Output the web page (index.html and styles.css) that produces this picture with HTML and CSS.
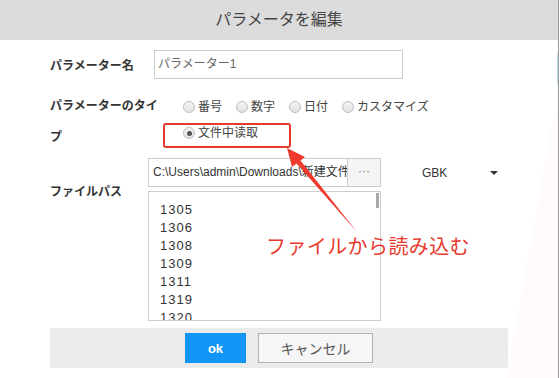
FILE: index.html
```html
<!DOCTYPE html>
<html lang="ja">
  <head>
    <meta charset="UTF-8" />
    <title>パラメータを編集</title>
    <link rel="stylesheet" href="styles.css">
  </head>
  <body>
    <div class="dialog">
      <!-- Title bar -->
      <div class="dialog-header">パラメータを編集</div>

      <div class="form">
        <!-- Name -->
        <div class="row row-name">
          <div class="label label-name">パラメーター名</div>
          <div class="text-input">パラメーター1</div>
        </div>

        <!-- Type -->
        <div class="row row-type">
          <div class="label label-type">パラメーターのタイプ</div>
          <div class="options">
            <div class="option-line">
              <span class="radio-item"><span class="radio"></span>番号</span>
              <span class="radio-item"><span class="radio"></span>数字</span>
              <span class="radio-item"><span class="radio"></span>日付</span>
              <span class="radio-item"><span class="radio"></span>カスタマイズ</span>
            </div>
            <div class="option-line second">
              <span class="radio-item marked"><span class="radio checked"></span>文件中读取</span>
            </div>
          </div>
        </div>

        <!-- File path -->
        <div class="row row-file">
          <div class="label label-file">ファイルパス</div>
          <div class="file-col">
            <div class="path-group">
              <div class="path-input">C:\Users\admin\Downloads\新建文件</div>
              <div class="browse-btn">···</div>
            </div>
            <div class="preview">
              <div class="preview-line">1305</div>
              <div class="preview-line">1306</div>
              <div class="preview-line">1308</div>
              <div class="preview-line">1309</div>
              <div class="preview-line">1311</div>
              <div class="preview-line">1319</div>
              <div class="preview-line">1320</div>
              <div class="scroll-thumb"></div>
            </div>
          </div>
          <div class="encoding">
            <span>GBK</span>
            <span class="caret"></span>
          </div>
        </div>

        <!-- Buttons -->
        <div class="dialog-footer">
          <button class="btn btn-ok">ok</button>
          <button class="btn btn-cancel">キャンセル</button>
        </div>
      </div>

      <!-- Annotation -->
      <svg class="arrow" width="560" height="378" viewBox="0 0 560 378">
        <polygon points="287,148 305,157 300.5,160.5 357,232 296.5,163.5 292,167" fill="#ef3a2d" />
      </svg>
      <div class="note">ファイルから読み込む</div>

      <div class="edge-tint"></div>
      <div class="edge-blue"></div>
    </div>
  </body>
</html>
```

FILE: styles.css
```css
/* Basic Reset */
* {
  margin: 0;
  padding: 0;
  box-sizing: border-box;
}

body {
  font-family: "Liberation Sans", "Noto Sans CJK JP", sans-serif;
  background-color: #ffffff;
  color: #333;
  width: 560px;
  height: 378px;
  overflow: hidden;
}

/* Dialog */
.dialog {
  position: relative;
  width: 559px;
  height: 378px;
  border-right: 1px solid #9c9c9c;
  overflow: hidden;
}

.dialog-header {
  height: 40px;
  line-height: 40px;
  background-color: #dcdcdc;
  text-align: center;
  font-size: 16px;
  color: #444;
}

.form {
  padding-left: 50px;
}

.row {
  display: flex;
}

.label {
  font-size: 12px;
  font-weight: bold;
  color: #333;
}

/* Name row */
.row-name {
  margin-top: 10px;
  height: 29px;
  align-items: center;
}

.label-name {
  width: 104px;
}

.text-input {
  width: 249px;
  height: 29px;
  border: 1px solid #cccccc;
  font-size: 12px;
  line-height: 27px;
  padding-left: 3px;
  color: #666;
}

/* Type row */
.row-type {
  margin-top: 12px;
}

.label-type {
  width: 115px;
  margin-right: 18px;
  line-height: 31px;
}

.option-line {
  display: flex;
  align-items: center;
  height: 31px;
}

.option-line.second {
  height: 22px;
}

.radio-item {
  display: inline-flex;
  align-items: center;
  font-size: 12px;
  line-height: 16px;
  color: #444;
  margin-right: 14px;
}

.radio {
  width: 12px;
  height: 12px;
  border-radius: 50%;
  border: 1px solid #bdbdbd;
  background: linear-gradient(#f4f4f4, #e2e2e2);
  margin-right: 3px;
  position: relative;
}

.radio.checked::after {
  content: "";
  position: absolute;
  left: 2.5px;
  top: 2.5px;
  width: 5px;
  height: 5px;
  border-radius: 50%;
  background-color: #555;
}

/* red highlight round the chosen option */
.marked {
  position: relative;
}

.marked::before {
  content: "";
  position: absolute;
  left: -20px;
  top: -2px;
  width: 124px;
  height: 21px;
  border: 2px solid #e53a2c;
  border-radius: 3px;
}

/* File row */
.row-file {
  margin-top: 5px;
}

.label-file {
  width: 98px;
  padding-top: 24px;
}

.file-col {
  width: 233px;
}

.path-group {
  display: flex;
  height: 29px;
}

.path-input {
  flex: 1;
  border: 1px solid #cccccc;
  border-right: none;
  font-size: 12px;
  line-height: 27px;
  padding-left: 4px;
  white-space: nowrap;
  overflow: hidden;
  color: #333;
}

.browse-btn {
  width: 34px;
  border: 1px solid #cccccc;
  background-color: #f5f5f5;
  text-align: center;
  line-height: 25px;
  font-size: 12px;
  color: #777;
}

.preview {
  position: relative;
  margin-top: 4px;
  height: 130px;
  border: 1px solid #cccccc;
  padding: 9px 0 0 11px;
  overflow: hidden;
}

.preview-line {
  font-size: 13px;
  line-height: 18px;
  letter-spacing: 1px;
  color: #333;
}

.scroll-thumb {
  position: absolute;
  right: 1px;
  top: 1px;
  width: 3px;
  height: 15px;
  background-color: #a9a9a9;
}

.encoding {
  display: flex;
  align-items: center;
  height: 29px;
  margin-left: 41px;
  font-size: 12px;
  color: #333;
}

.caret {
  margin-left: 43px;
  width: 0;
  height: 0;
  border-left: 4px solid transparent;
  border-right: 4px solid transparent;
  border-top: 4px solid #333;
}

/* Footer */
.dialog-footer {
  margin-top: 7px;
  width: 458px;
  height: 40px;
  background-color: #ebebeb;
  display: flex;
  justify-content: center;
  align-items: center;
  gap: 12px;
}

.btn {
  height: 30px;
  font-family: "Liberation Sans", "Noto Sans CJK JP", sans-serif;
  cursor: pointer;
}

.btn-ok {
  width: 61px;
  border: none;
  background-color: #1296f6;
  color: white;
  font-weight: bold;
  font-size: 13px;
}

.btn-cancel {
  width: 115px;
  border: 1px solid #b3b3b3;
  background-color: #f6f6f6;
  color: #555;
  font-size: 14px;
}

/* Annotation overlay */
.arrow {
  position: absolute;
  left: 0;
  top: 0;
}

.note {
  position: absolute;
  left: 266px;
  top: 234px;
  font-size: 20px;
  letter-spacing: 0.4px;
  line-height: 26px;
  color: #e8392e;
}

.edge-tint {
  position: absolute;
  right: 0;
  top: 0;
  width: 52px;
  height: 378px;
  background-color: #fffbfa;
  clip-path: polygon(100% 24%, 100% 100%, 0 100%);
  z-index: -1;
}

.edge-blue {
  position: absolute;
  right: 0;
  top: 53px;
  width: 1px;
  height: 32px;
  background-color: #b8dcea;
}
```
